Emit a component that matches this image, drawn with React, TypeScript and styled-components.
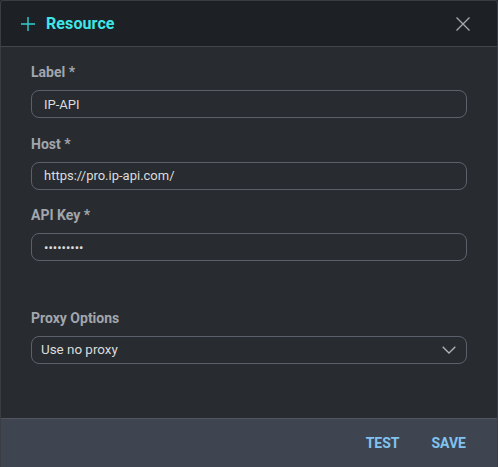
import React from "react";
import styled, { createGlobalStyle } from "styled-components";

const Global = createGlobalStyle`
  html, body { margin: 0; padding: 0; background: #25282c; }
  body { font-family: Roboto, "Liberation Sans", sans-serif; }
  * { box-sizing: border-box; }
`;

const Dialog = styled.div`
  width: 498px;
  height: 467px;
  display: flex;
  flex-direction: column;
  background: #282c31;
  border: 1px solid #3a3e44;
  border-bottom: 0;
  border-radius: 4px 4px 0 0;
  overflow: hidden;
`;

const Header = styled.div`
  height: 46px;
  flex: none;
  display: flex;
  align-items: center;
  padding: 0 27px 0 19px;
  background: #1d2024;
  border-bottom: 1px solid #43474d;
`;

const Title = styled.h2`
  margin: 0 0 0 10px;
  flex: 1;
  font-size: 16px;
  font-weight: 700;
  color: #3fe6e8;
  letter-spacing: 0.1px;
`;

const IconButton = styled.button`
  border: 0;
  background: none;
  padding: 0;
  display: flex;
  cursor: pointer;
`;

const Body = styled.div`
  flex: 1;
  display: flex;
  flex-direction: column;
  padding: 17px 30px 0 30px;
`;

const Field = styled.div<{ $gap?: number }>`
  display: flex;
  flex-direction: column;
  margin-bottom: ${(p) => p.$gap ?? 17.5}px;
`;

const Label = styled.label`
  font-size: 14px;
  line-height: 16px;
  font-weight: 700;
  color: #a2a6ac;
  margin-bottom: 10px;
`;

const Input = styled.input`
  height: 28px;
  width: 100%;
  border: 1px solid #5b616b;
  border-radius: 8px;
  background: transparent;
  color: #dcdcdc;
  font-family: Roboto, "Liberation Sans", sans-serif;
  font-size: 13px;
  padding: 0 12px;
  outline: none;
`;

const SelectBox = styled.div`
  height: 28px;
  width: 100%;
  border: 1px solid #5b616b;
  border-radius: 8px;
  display: flex;
  align-items: center;
  justify-content: space-between;
  padding: 0 10px 0 9px;
  color: #dcdcdc;
  font-size: 13.4px;
`;

const Footer = styled.div`
  height: 49px;
  flex: none;
  display: flex;
  align-items: center;
  justify-content: flex-end;
  gap: 32px;
  padding: 0 31px 0 0;
  background: #3f4550;
  border-top: 1px solid #51565e;
`;

const TextButton = styled.button`
  border: 0;
  background: none;
  padding: 0;
  font-family: Roboto, "Liberation Sans", sans-serif;
  font-size: 14px;
  font-weight: 700;
  color: #80c3f1;
  text-transform: uppercase;
  cursor: pointer;
`;

export default function App() {
  return (
    <>
      <Global />
      <Dialog>
        <Header>
          <svg width="16" height="16" viewBox="0 0 16 16">
            <path d="M8 1v14M1 8h14" stroke="#2fcfd1" strokeWidth="1.4" />
          </svg>
          <Title>Resource</Title>
          <IconButton aria-label="close">
            <svg width="14" height="14" viewBox="0 0 14 14">
              <path d="M0.5 0.5l13 13M13.5 0.5l-13 13" stroke="#a4a6a9" strokeWidth="1.4" />
            </svg>
          </IconButton>
        </Header>
        <Body>
          <Field>
            <Label>Label *</Label>
            <Input defaultValue="IP-API" />
          </Field>
          <Field>
            <Label>Host *</Label>
            <Input defaultValue="https://pro.ip-api.com/" />
          </Field>
          <Field $gap={48.5}>
            <Label>API Key *</Label>
            <Input type="password" defaultValue="abcdefghi" />
          </Field>
          <Field>
            <Label>Proxy Options</Label>
            <SelectBox>
              <span>Use no proxy</span>
              <svg width="14" height="8" viewBox="0 0 14 8">
                <path d="M0.7 0.7L7 7l6.3-6.3" stroke="#b0b3b8" strokeWidth="1.3" fill="none" />
              </svg>
            </SelectBox>
          </Field>
        </Body>
        <Footer>
          <TextButton>Test</TextButton>
          <TextButton>Save</TextButton>
        </Footer>
      </Dialog>
    </>
  );
}
